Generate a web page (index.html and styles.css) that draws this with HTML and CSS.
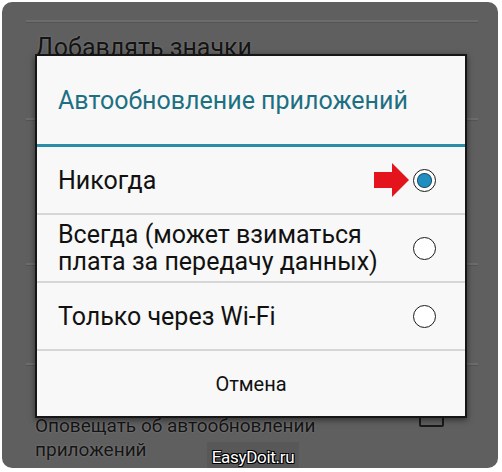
FILE: index.html
```html
<!DOCTYPE html>
<html lang="ru">
<head>
  <meta charset="UTF-8">
  <meta name="viewport" content="width=device-width, initial-scale=1.0">
  <link rel="stylesheet" href="styles.css">
  <title>Автообновление приложений</title>
</head>
<body>
  <div class="screen">
    <div class="settings">
      <div class="rule first"></div>
      <div class="setting top-setting">Добавлять значки</div>
      <div class="rule"></div>
      <div class="gap-a"></div>
      <div class="rule"></div>
      <div class="gap-b"></div>
      <div class="rule"></div>
      <div class="setting bottom-setting">
        <span>Оповещать об автообновлении<br>приложений</span>
        <span class="checkbox"></span>
      </div>
    </div>

    <div class="dialog">
      <div class="dialog-title">Автообновление приложений</div>
      <div class="option">
        <span class="option-label">Никогда</span>
        <svg class="arrow" width="38" height="36" viewBox="0 0 38 36">
          <polygon points="1,10 19,10 19,1 36,18 19,35 19,26 1,26" fill="#e3141b"/>
        </svg>
        <span class="radio checked"></span>
      </div>
      <div class="option tall">
        <span class="option-label">Всегда (может взиматься<br>плата за передачу данных)</span>
        <span class="radio"></span>
      </div>
      <div class="option">
        <span class="option-label">Только через Wi-Fi</span>
        <span class="radio"></span>
      </div>
      <div class="dialog-action">Отмена</div>
    </div>

    <div class="watermark">EasyDoit.ru</div>
  </div>
</body>
</html>
```

FILE: styles.css
```css
body {
  margin: 0;
  background-color: #fff;
  font-family: Roboto, "Noto Sans", sans-serif;
}

.screen {
  position: relative;
  width: 496px;
  height: 466px;
  margin: 2px;
  background-color: #5f5f5f;
  border-radius: 10px;
  overflow: hidden;
}

.settings {
  padding: 18px 20px 0 24px;
}

.rule {
  height: 2px;
  background-color: #6c6c6c;
  border-bottom: 1px solid #545454;
}

.setting {
  color: #141414;
  padding-left: 9px;
  text-shadow: 0 0 2px #8a8a8a;
}

.top-setting {
  font-size: 25px;
  padding-top: 10px;
  height: 85px;
}

.gap-a {
  height: 142px;
}

.gap-b {
  height: 97px;
}

.bottom-setting {
  display: flex;
  justify-content: space-between;
  font-size: 19px;
  line-height: 24px;
  padding-top: 48px;
  padding-right: 34px;
}

.checkbox {
  width: 21px;
  height: 20px;
  margin-top: -11px;
  border: 2px solid #1a1a1a;
  border-radius: 2px;
}

.dialog {
  position: absolute;
  left: 33px;
  top: 52px;
  width: 428px;
  background-color: #f8f8f8;
  border: 2px solid #161616;
  box-shadow: 0 2px 6px rgba(0, 0, 0, 0.5);
}

.dialog-title {
  height: 88px;
  padding-left: 21px;
  display: flex;
  align-items: center;
  font-size: 25px;
  color: #1d6f82;
  border-bottom: 3px solid #2b8ea8;
}

.option {
  display: flex;
  align-items: center;
  height: 66px;
  padding: 0 29px 0 21px;
  border-bottom: 2px solid #d6d6d6;
  color: #111;
  font-size: 25px;
}

.option.tall {
  line-height: 27px;
}

.option-label {
  flex: 1;
}

.arrow {
  margin-right: 2px;
}

.radio {
  width: 21px;
  height: 21px;
  border: 1.5px solid #1a1a1a;
  border-radius: 50%;
  background-color: #fff;
}

.radio.checked {
  background: radial-gradient(circle, #1f8fc1 0, #1f8fc1 6px, #1a4f66 7px, #fff 8px);
}

.dialog-action {
  height: 65px;
  display: flex;
  align-items: center;
  justify-content: center;
  font-size: 20px;
  color: #111;
}

.watermark {
  position: absolute;
  left: 205px;
  bottom: 0;
  width: 92px;
  height: 26px;
  background-color: #585858;
  color: #fff;
  font-size: 17px;
  letter-spacing: -0.3px;
  text-align: center;
  line-height: 30px;
  text-shadow: 1px 1px 0 #000, -1px -1px 0 #000, 1px -1px 0 #000, -1px 1px 0 #000;
}
```
